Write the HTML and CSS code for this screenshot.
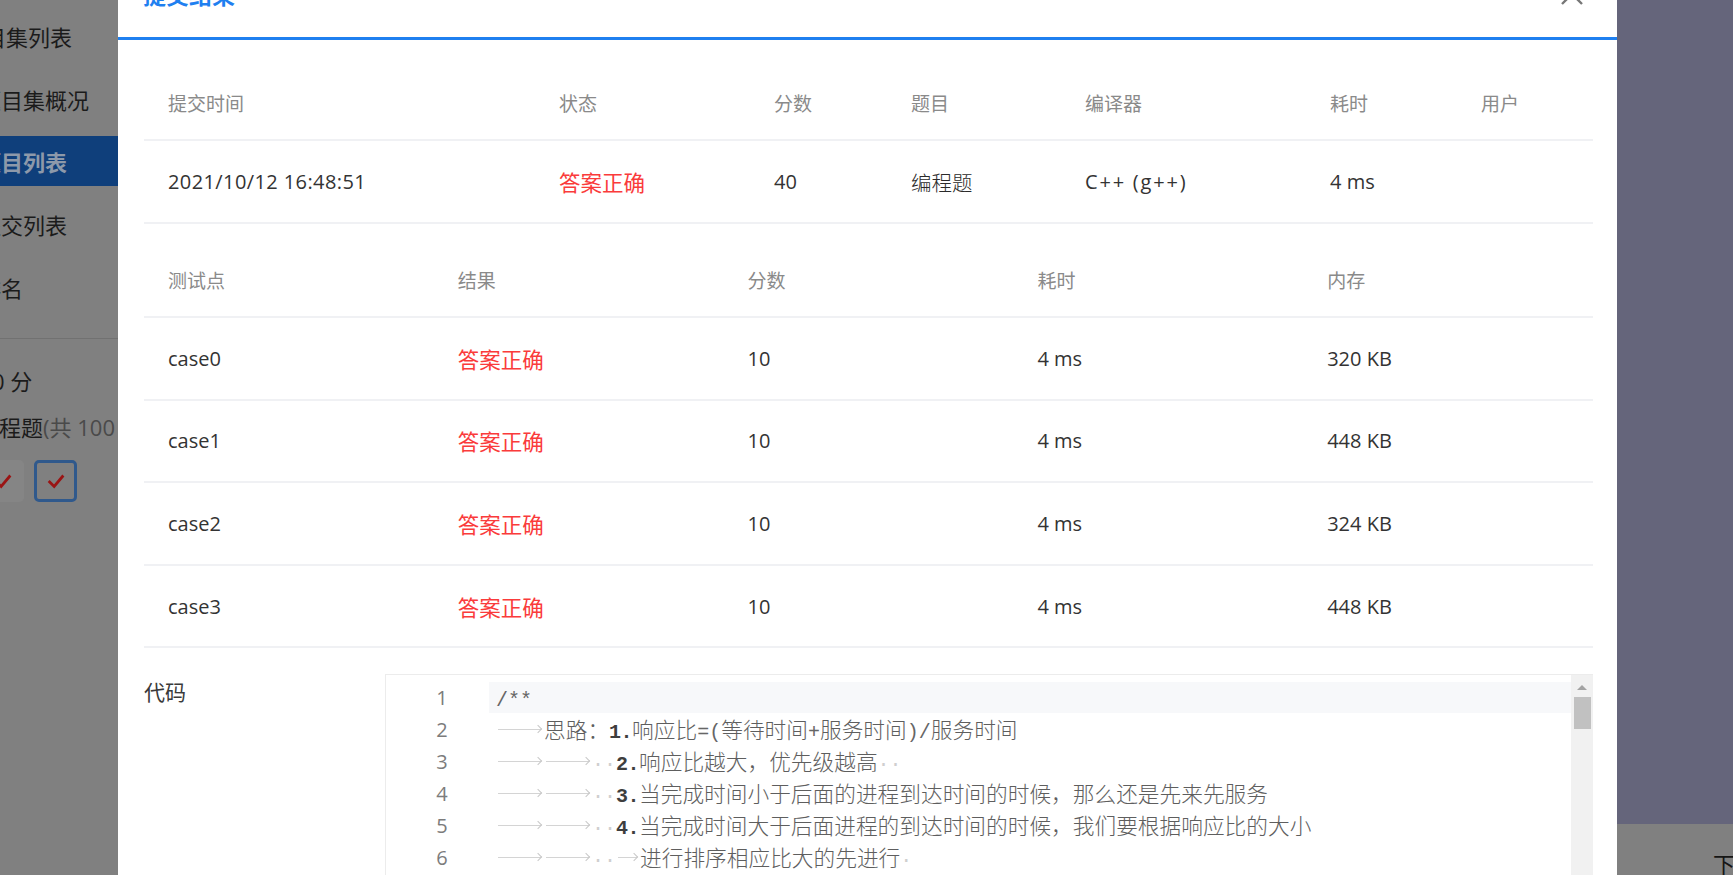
FILE: index.html
```html
<!DOCTYPE html>
<html lang="zh-CN">
<head>
<meta charset="utf-8">
<title>提交结果</title>
<link rel="stylesheet" href="styles.css">
</head>
<body>
<div class="page">
  <aside class="sidebar">
    <nav class="nav">
      <div class="nav-item first">题目集列表</div>
      <div class="nav-item">题目集概况</div>
      <div class="nav-item active">题目列表</div>
      <div class="nav-item">提交列表</div>
      <div class="nav-item">排名</div>
    </nav>
    <div class="side-divider"></div>
    <div class="score">0 分</div>
    <div class="ptype">编程题<span class="muted">(共 100 分)</span></div>
    <div class="boxes">
      <div class="qbox plain"><svg viewBox="0 0 24 24" width="22" height="22"><polyline points="4,12 10,18 20,6" fill="none" stroke="#9a1414" stroke-width="3"/></svg></div>
      <div class="qbox current"><svg viewBox="0 0 24 24" width="22" height="22"><polyline points="4,12 10,18 20,6" fill="none" stroke="#9a1414" stroke-width="3"/></svg></div>
    </div>
  </aside>

  <main class="modal">
    <div class="modal-header">
      <div class="modal-title">提交结果</div>
      <svg class="modal-close" viewBox="0 0 22 22" width="22" height="22"><path d="M1 1 L21 21 M21 1 L1 21" stroke="#777" stroke-width="2.4" fill="none"/></svg>
    </div>

    <div class="modal-body">
      <div class="tbl tbl-summary">
        <div class="tr th">
          <div class="td">提交时间</div><div class="td">状态</div><div class="td">分数</div><div class="td">题目</div><div class="td">编译器</div><div class="td">耗时</div><div class="td">用户</div>
        </div>
        <div class="tr body">
          <div class="td date">2021/10/12 16:48:51</div><div class="td ok">答案正确</div><div class="td">40</div><div class="td cjk">编程题</div><div class="td compiler">C++ (g++)</div><div class="td">4 ms</div><div class="td"></div>
        </div>
      </div>

      <div class="tbl tbl-cases">
        <div class="tr th">
          <div class="td">测试点</div><div class="td">结果</div><div class="td">分数</div><div class="td">耗时</div><div class="td">内存</div>
        </div>
        <div class="tr body">
          <div class="td">case0</div><div class="td ok">答案正确</div><div class="td">10</div><div class="td">4 ms</div><div class="td">320 KB</div>
        </div>
        <div class="tr body">
          <div class="td">case1</div><div class="td ok">答案正确</div><div class="td">10</div><div class="td">4 ms</div><div class="td">448 KB</div>
        </div>
        <div class="tr body">
          <div class="td">case2</div><div class="td ok">答案正确</div><div class="td">10</div><div class="td">4 ms</div><div class="td">324 KB</div>
        </div>
        <div class="tr body">
          <div class="td">case3</div><div class="td ok">答案正确</div><div class="td">10</div><div class="td">4 ms</div><div class="td">448 KB</div>
        </div>
      </div>

      <div class="code-section">
        <div class="code-label">代码</div>
        <div class="code-box">
          <div class="gutter">
            <div class="ln">1</div>
            <div class="ln">2</div>
            <div class="ln">3</div>
            <div class="ln">4</div>
            <div class="ln">5</div>
            <div class="ln">6</div>
            <div class="ln">7</div>
          </div>
          <div class="code">
            <div class="cl active"><span class="sym">/**</span></div>
            <div class="cl"><span class="tab"></span><span class="zh">思路：</span><span class="num">1.</span><span class="zh">响应比</span>=(<span class="zh">等待时间</span>+<span class="zh">服务时间</span>)/<span class="zh">服务时间</span></div>
            <div class="cl"><span class="tab"></span><span class="tab"></span><span class="ws">··</span><span class="num">2.</span><span class="zh">响应比越大，优先级越高</span><span class="ws">··</span></div>
            <div class="cl"><span class="tab"></span><span class="tab"></span><span class="ws">··</span><span class="num">3.</span><span class="zh">当完成时间小于后面的进程到达时间的时候，那么还是先来先服务</span></div>
            <div class="cl"><span class="tab"></span><span class="tab"></span><span class="ws">··</span><span class="num">4.</span><span class="zh">当完成时间大于后面进程的到达时间的时候，我们要根据响应比的大小</span></div>
            <div class="cl"><span class="tab"></span><span class="tab"></span><span class="ws">··</span><span class="tab short"></span><span class="zh">进行排序相应比大的先进行</span><span class="ws">·</span></div>
            <div class="cl"></div>
          </div>
          <div class="vscroll">
            <div class="vs-arrow"></div>
            <div class="vs-thumb"></div>
          </div>
        </div>
      </div>
    </div>
  </main>

  <aside class="backdrop">
    <div class="backdrop-top"></div>
    <div class="backdrop-bottom">下一题</div>
  </aside>
</div>
</body>
</html>
```

FILE: styles.css
```css
* { box-sizing: border-box; }

html, body {
  margin: 0;
  padding: 0;
}

body {
  width: 1733px;
  height: 875px;
  overflow: hidden;
  font-family: "Open Sans", "Noto Sans CJK SC", sans-serif;
}

.page {
  display: flex;
  width: 1733px;
  height: 875px;
  overflow: hidden;
}

/* ---------- left sidebar (under overlay) ---------- */
.sidebar {
  width: 118px;
  flex-shrink: 0;
  background: #808080;
  overflow: hidden;
  font-family: "Noto Sans CJK SC", sans-serif;
  color: #1b1b1b;
}

.nav {
  display: flex;
  flex-direction: column;
  gap: 12.7px;
  padding-top: 11px;
}

.nav-item {
  height: 50px;
  line-height: 50px;
  font-size: 22px;
  white-space: nowrap;
  text-indent: -21px;
}

.nav-item.first {
  text-indent: -38px;
}

.nav-item.active {
  background: #0f3f7b;
  color: #8d99aa;
  font-weight: bold;
}

.side-divider {
  margin-top: 26px;
  height: 1px;
  background: #717171;
}

.score {
  margin-top: 27px;
  font-size: 22px;
  line-height: 30px;
  white-space: nowrap;
  text-indent: -8px;
  font-family: "Open Sans", "Noto Sans CJK SC", sans-serif;
}

.ptype {
  margin-top: 16px;
  font-size: 22px;
  line-height: 30px;
  white-space: nowrap;
  text-indent: -23px;
  font-family: "Open Sans", "Noto Sans CJK SC", sans-serif;
}

.ptype .muted {
  color: #4a4a4a;
}

.boxes {
  margin-top: 18px;
  display: flex;
  gap: 10px;
  margin-left: -19px;
}

.qbox {
  width: 43px;
  height: 42px;
  border-radius: 5px;
  display: flex;
  align-items: center;
  justify-content: center;
}

.qbox.plain {
  background: #858585;
}

.qbox.current {
  border: 3px solid #30598c;
}

/* ---------- modal ---------- */
.modal {
  width: 1499px;
  flex-shrink: 0;
  background: #fff;
  overflow: hidden;
}

.modal-header {
  height: 40px;
  border-bottom: 3px solid #1f80f0;
  display: flex;
  justify-content: space-between;
  align-items: flex-start;
  padding: 0 34px 0 25px;
}

.modal-title {
  margin-top: -18px;
  font-family: "Noto Sans CJK SC", sans-serif;
  font-size: 23px;
  line-height: 24px;
  font-weight: bold;
  color: #1f80f0;
}

.modal-close {
  margin-top: -17px;
}

.modal-body {
  padding: 0 24px 0 26px;
}

.tbl {
  display: flex;
  flex-direction: column;
}

.tbl-summary {
  margin-top: 26px;
}

.tbl-cases {
  margin-top: 19px;
}

.tr {
  display: grid;
  align-items: center;
  border-bottom: 2px solid #f0f1f4;
}

.tbl-summary .tr {
  grid-template-columns: 391px 215px 137px 174px 245px 151px 1fr;
}

.tbl-cases .tr {
  grid-template-columns: repeat(5, 1fr);
}

.tr.th {
  height: 75px;
  font-size: 19px;
  color: #8a8a8a;
  font-family: "Noto Sans CJK SC", sans-serif;
}

.tr.body {
  height: 82.6px;
  font-size: 20px;
  color: #333;
}

.tbl-summary .tr.body {
  height: 83px;
}

.td {
  padding-left: 24px;
  white-space: nowrap;
}

.td.date {
  letter-spacing: 0.4px;
}

.td.compiler {
  letter-spacing: 1.8px;
}

.td.ok {
  color: #fa3b3b;
  font-size: 21.5px;
  font-family: "Noto Sans CJK SC", sans-serif;
}

.td.cjk {
  font-size: 20.5px;
  font-family: "Noto Sans CJK SC", sans-serif;
  font-weight: 300;
  color: #2a2a2a;
}

/* ---------- code ---------- */
.code-section {
  margin-top: 26px;
  display: flex;
}

.code-label {
  width: 241px;
  flex-shrink: 0;
  margin-top: 5px;
  font-family: "Noto Sans CJK SC", sans-serif;
  font-size: 21px;
  line-height: 24px;
  color: #3a3a3a;
}

.code-box {
  flex: 1;
  height: 260px;
  border: 1px solid #ececec;
  border-right: none;
  display: flex;
}

.gutter {
  width: 103px;
  flex-shrink: 0;
  padding-top: 7px;
  padding-left: 9px;
  text-align: center;
  font-family: "Open Sans", sans-serif;
  font-size: 20px;
  color: #7c7c7c;
}

.ln {
  height: 32px;
  line-height: 32px;
}

.code {
  flex: 1;
  min-width: 0;
  padding-top: 6px;
  font-family: "Liberation Mono", "Noto Sans CJK SC", monospace;
  font-size: 20px;
  color: #666;
  overflow: hidden;
}

.cl {
  height: 32px;
  line-height: 32px;
  padding-left: 7px;
  white-space: pre;
}

.cl.active {
  background: #f7f8fa;
  margin-top: 1px;
  height: 31px;
}

.cl .sym {
  display: inline-block;
  padding-top: 3px;
}

.cl .num {
  color: #3e3e3e;
  font-weight: bold;
  letter-spacing: -0.5px;
}

.cl .zh {
  font-family: "Noto Sans CJK SC", sans-serif;
  font-size: 21.7px;
  font-weight: 300;
  color: #5e5e5e;
}

.tab {
  display: inline-block;
  width: 48px;
  height: 32px;
  vertical-align: top;
  position: relative;
}

.tab::before {
  content: "";
  position: absolute;
  left: 2px;
  right: 3px;
  top: 16px;
  border-top: 1px solid #d4d4d4;
}

.tab::after {
  content: "";
  position: absolute;
  right: 3px;
  top: 13px;
  width: 5px;
  height: 5px;
  border-top: 1px solid #c8c8c8;
  border-right: 1px solid #c8c8c8;
  transform: rotate(45deg);
}

.tab.short {
  width: 24px;
}

.ws {
  color: #cfcfcf;
}

.vscroll {
  width: 22px;
  flex-shrink: 0;
  background: #f1f1f1;
  padding-top: 10px;
  display: flex;
  flex-direction: column;
  align-items: center;
}

.vs-arrow {
  width: 0;
  height: 0;
  border-left: 5px solid transparent;
  border-right: 5px solid transparent;
  border-bottom: 5px solid #a3a3a3;
}

.vs-thumb {
  margin-top: 7px;
  width: 17px;
  height: 32px;
  background: #c1c1c1;
}

/* ---------- right backdrop ---------- */
.backdrop {
  flex: 1;
  display: flex;
  flex-direction: column;
  overflow: hidden;
}

.backdrop-top {
  height: 827px;
  background: #65657b;
}

.backdrop-bottom {
  flex: 1;
  background: #808080;
  padding: 27px 0 0 96px;
  font-family: "Noto Sans CJK SC", sans-serif;
  font-size: 22px;
  line-height: 24px;
  color: #151515;
  white-space: nowrap;
}
```
